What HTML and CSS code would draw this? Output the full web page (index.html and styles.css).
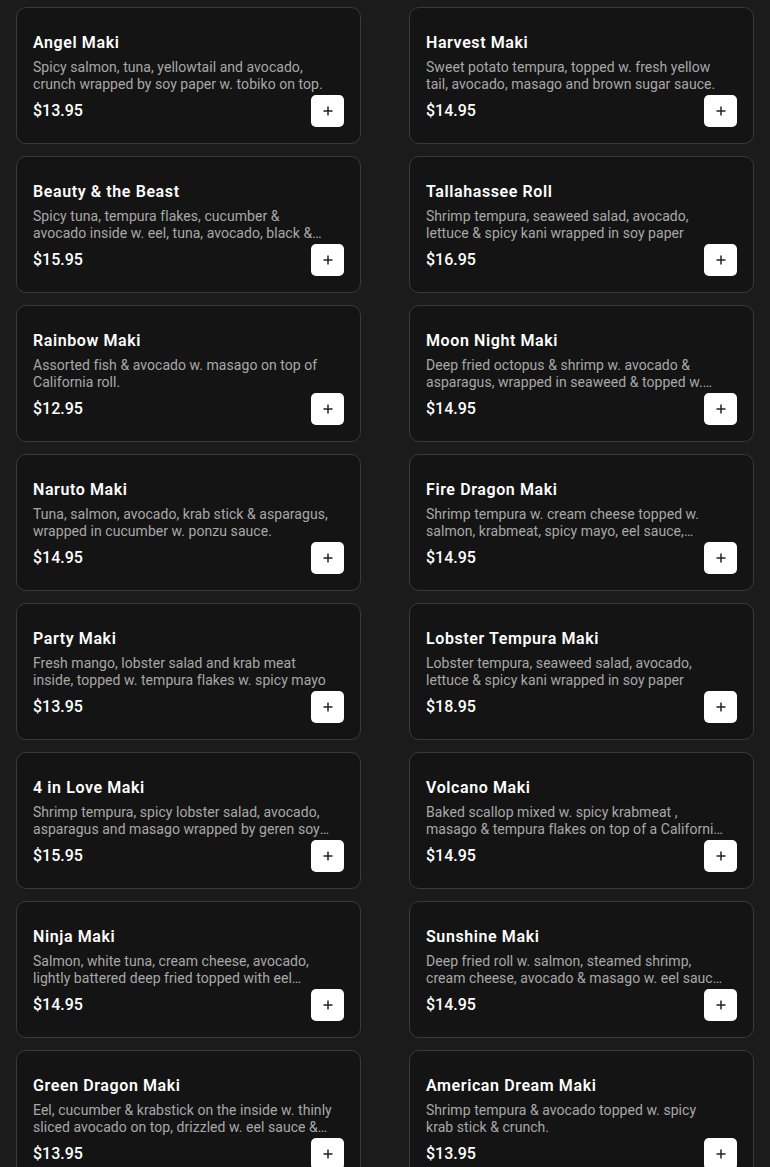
FILE: index.html
```html
<!DOCTYPE html>
<html lang="en">
<head>
<meta charset="UTF-8" />
<meta name="viewport" content="width=device-width, initial-scale=1" />
<title>Special Rolls</title>
<link rel="stylesheet" href="styles.css">
</head>
<body>
  <div class="menu-grid">
    <div class="item">
      <div class="name">Angel Maki</div>
      <div class="desc">Spicy salmon, tuna, yellowtail and avocado, crunch wrapped by soy paper w. tobiko on top.</div>
      <div class="bottom"><span class="price">$13.95</span><button class="add" aria-label="Add"><svg width="12" height="12" viewBox="0 0 12 12"><path d="M6 1.5v9M1.5 6h9" stroke="#222" stroke-width="1.5"/></svg></button></div>
    </div>
    <div class="item">
      <div class="name">Harvest Maki</div>
      <div class="desc">Sweet potato tempura, topped w. fresh yellow tail, avocado, masago and brown sugar sauce.</div>
      <div class="bottom"><span class="price">$14.95</span><button class="add" aria-label="Add"><svg width="12" height="12" viewBox="0 0 12 12"><path d="M6 1.5v9M1.5 6h9" stroke="#222" stroke-width="1.5"/></svg></button></div>
    </div>
    <div class="item">
      <div class="name">Beauty &amp; the Beast</div>
      <div class="desc">Spicy tuna, tempura flakes, cucumber &amp; avocado inside w. eel, tuna, avocado, black &amp; red tobiko on top.</div>
      <div class="bottom"><span class="price">$15.95</span><button class="add" aria-label="Add"><svg width="12" height="12" viewBox="0 0 12 12"><path d="M6 1.5v9M1.5 6h9" stroke="#222" stroke-width="1.5"/></svg></button></div>
    </div>
    <div class="item">
      <div class="name">Tallahassee Roll</div>
      <div class="desc">Shrimp tempura, seaweed salad, avocado, lettuce &amp; spicy kani wrapped in soy paper</div>
      <div class="bottom"><span class="price">$16.95</span><button class="add" aria-label="Add"><svg width="12" height="12" viewBox="0 0 12 12"><path d="M6 1.5v9M1.5 6h9" stroke="#222" stroke-width="1.5"/></svg></button></div>
    </div>
    <div class="item">
      <div class="name">Rainbow Maki</div>
      <div class="desc">Assorted fish &amp; avocado w. masago on top of California roll.</div>
      <div class="bottom"><span class="price">$12.95</span><button class="add" aria-label="Add"><svg width="12" height="12" viewBox="0 0 12 12"><path d="M6 1.5v9M1.5 6h9" stroke="#222" stroke-width="1.5"/></svg></button></div>
    </div>
    <div class="item">
      <div class="name">Moon Night Maki</div>
      <div class="desc">Deep fried octopus &amp; shrimp w. avocado &amp; asparagus, wrapped in seaweed &amp; topped w. masago &amp; eel sauce.</div>
      <div class="bottom"><span class="price">$14.95</span><button class="add" aria-label="Add"><svg width="12" height="12" viewBox="0 0 12 12"><path d="M6 1.5v9M1.5 6h9" stroke="#222" stroke-width="1.5"/></svg></button></div>
    </div>
    <div class="item">
      <div class="name">Naruto Maki</div>
      <div class="desc">Tuna, salmon, avocado, krab stick &amp; asparagus, wrapped in cucumber w. ponzu sauce.</div>
      <div class="bottom"><span class="price">$14.95</span><button class="add" aria-label="Add"><svg width="12" height="12" viewBox="0 0 12 12"><path d="M6 1.5v9M1.5 6h9" stroke="#222" stroke-width="1.5"/></svg></button></div>
    </div>
    <div class="item">
      <div class="name">Fire Dragon Maki</div>
      <div class="desc">Shrimp tempura w. cream cheese topped w. salmon, krabmeat, spicy mayo, eel sauce, masago &amp; scallion.</div>
      <div class="bottom"><span class="price">$14.95</span><button class="add" aria-label="Add"><svg width="12" height="12" viewBox="0 0 12 12"><path d="M6 1.5v9M1.5 6h9" stroke="#222" stroke-width="1.5"/></svg></button></div>
    </div>
    <div class="item">
      <div class="name">Party Maki</div>
      <div class="desc">Fresh mango, lobster salad and krab meat inside, topped w. tempura flakes w. spicy mayo</div>
      <div class="bottom"><span class="price">$13.95</span><button class="add" aria-label="Add"><svg width="12" height="12" viewBox="0 0 12 12"><path d="M6 1.5v9M1.5 6h9" stroke="#222" stroke-width="1.5"/></svg></button></div>
    </div>
    <div class="item">
      <div class="name">Lobster Tempura Maki</div>
      <div class="desc">Lobster tempura, seaweed salad, avocado, lettuce &amp; spicy kani wrapped in soy paper</div>
      <div class="bottom"><span class="price">$18.95</span><button class="add" aria-label="Add"><svg width="12" height="12" viewBox="0 0 12 12"><path d="M6 1.5v9M1.5 6h9" stroke="#222" stroke-width="1.5"/></svg></button></div>
    </div>
    <div class="item">
      <div class="name">4 in Love Maki</div>
      <div class="desc">Shrimp tempura, spicy lobster salad, avocado, asparagus and masago wrapped by geren soy paper.</div>
      <div class="bottom"><span class="price">$15.95</span><button class="add" aria-label="Add"><svg width="12" height="12" viewBox="0 0 12 12"><path d="M6 1.5v9M1.5 6h9" stroke="#222" stroke-width="1.5"/></svg></button></div>
    </div>
    <div class="item">
      <div class="name">Volcano Maki</div>
      <div class="desc">Baked scallop mixed w. spicy krabmeat , masago &amp; tempura flakes on top of a California roll.</div>
      <div class="bottom"><span class="price">$14.95</span><button class="add" aria-label="Add"><svg width="12" height="12" viewBox="0 0 12 12"><path d="M6 1.5v9M1.5 6h9" stroke="#222" stroke-width="1.5"/></svg></button></div>
    </div>
    <div class="item">
      <div class="name">Ninja Maki</div>
      <div class="desc">Salmon, white tuna, cream cheese, avocado, lightly battered deep fried topped with eel sauce.</div>
      <div class="bottom"><span class="price">$14.95</span><button class="add" aria-label="Add"><svg width="12" height="12" viewBox="0 0 12 12"><path d="M6 1.5v9M1.5 6h9" stroke="#222" stroke-width="1.5"/></svg></button></div>
    </div>
    <div class="item">
      <div class="name">Sunshine Maki</div>
      <div class="desc">Deep fried roll w. salmon, steamed shrimp, cream cheese, avocado &amp; masago w. eel sauce &amp; spicy mayo.</div>
      <div class="bottom"><span class="price">$14.95</span><button class="add" aria-label="Add"><svg width="12" height="12" viewBox="0 0 12 12"><path d="M6 1.5v9M1.5 6h9" stroke="#222" stroke-width="1.5"/></svg></button></div>
    </div>
    <div class="item">
      <div class="name">Green Dragon Maki</div>
      <div class="desc">Eel, cucumber &amp; krabstick on the inside w. thinly sliced avocado on top, drizzled w. eel sauce &amp; masago.</div>
      <div class="bottom"><span class="price">$13.95</span><button class="add" aria-label="Add"><svg width="12" height="12" viewBox="0 0 12 12"><path d="M6 1.5v9M1.5 6h9" stroke="#222" stroke-width="1.5"/></svg></button></div>
    </div>
    <div class="item">
      <div class="name">American Dream Maki</div>
      <div class="desc">Shrimp tempura &amp; avocado topped w. spicy krab stick &amp; crunch.</div>
      <div class="bottom"><span class="price">$13.95</span><button class="add" aria-label="Add"><svg width="12" height="12" viewBox="0 0 12 12"><path d="M6 1.5v9M1.5 6h9" stroke="#222" stroke-width="1.5"/></svg></button></div>
    </div>
  </div>
</body>
</html>
```

FILE: styles.css
```css
* {
  box-sizing: border-box;
}
body, html {
  margin: 0;
  padding: 0;
  background: #1b1b1b;
  font-family: Roboto, "Liberation Sans", sans-serif;
  -webkit-font-smoothing: antialiased;
}

/* Two column menu */
.menu-grid {
  display: grid;
  grid-template-columns: 1fr 1fr;
  gap: 12px 48px;
  padding: 7px 16px;
}

/* Menu item card */
.item {
  display: flex;
  flex-direction: column;
  height: 137px;
  padding: 23px 16px 16px;
  background: #141414;
  border: 1px solid #3a3a3a;
  border-radius: 10px;
  color: #fff;
}
.item .name {
  font-size: 16px;
  line-height: 24px;
  font-weight: 600;
  letter-spacing: 0.6px;
}
.item .desc {
  margin-top: 4px;
  padding-right: 11px;
  font-size: 14px;
  line-height: 17px;
  letter-spacing: 0.05px;
  color: #a8a8a8;
  display: -webkit-box;
  -webkit-line-clamp: 2;
  -webkit-box-orient: vertical;
  overflow: hidden;
  height: 34px;
}
.item .bottom {
  margin-top: 2px;
  display: flex;
  justify-content: space-between;
  align-items: center;
}
.item .price {
  font-size: 16px;
  line-height: 24px;
  font-weight: 500;
}
.add {
  width: 33px;
  height: 32px;
  padding: 0;
  border: none;
  border-radius: 5px;
  background: #fff;
  display: flex;
  align-items: center;
  justify-content: center;
  cursor: pointer;
}
```
